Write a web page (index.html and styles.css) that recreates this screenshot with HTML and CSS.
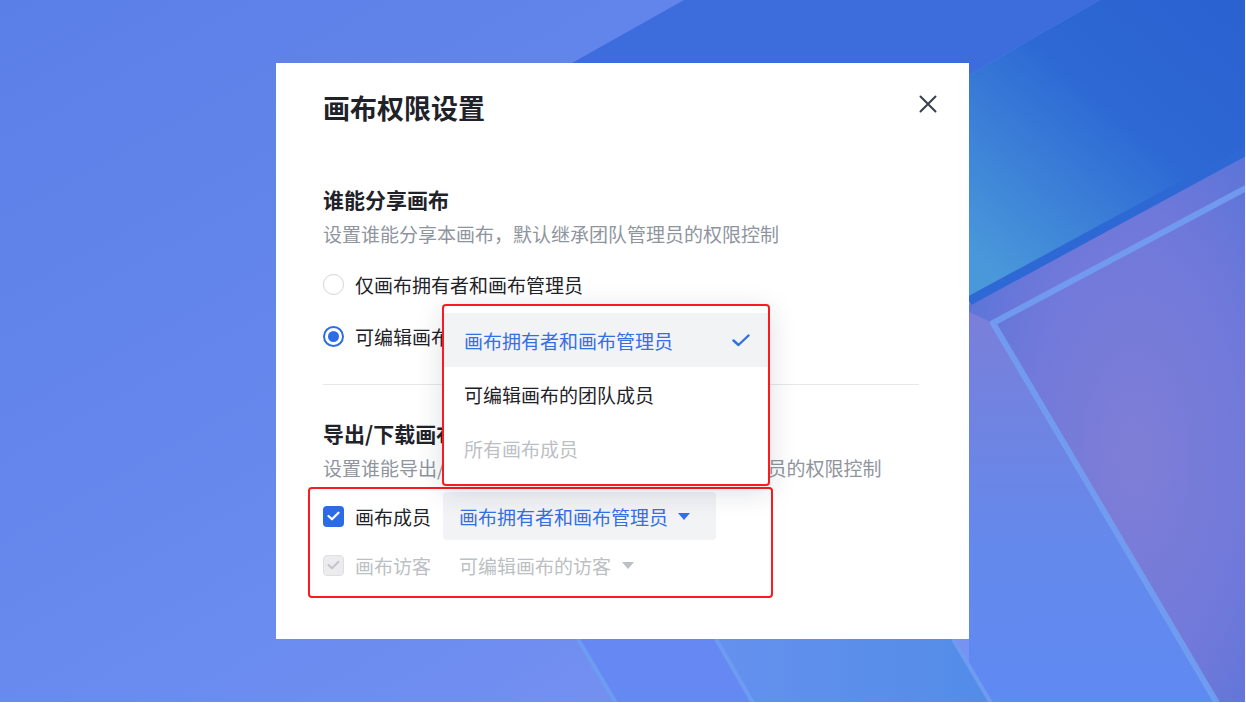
FILE: index.html
```html
<!DOCTYPE html>
<html lang="zh-CN">
<head>
  <meta charset="UTF-8">
  <title>画布权限设置</title>
  <link rel="stylesheet" href="styles.css">
</head>
<body>
<svg class="backdrop" viewBox="0 0 1246 703" preserveAspectRatio="none">
  <defs>
    <linearGradient id="base" x1="0" y1="0" x2="1" y2="1">
      <stop offset="0" stop-color="#5a7fe6"/>
      <stop offset="0.55" stop-color="#6a8bf0"/>
      <stop offset="1" stop-color="#7f96f2"/>
    </linearGradient>
    <linearGradient id="deep" x1="1" y1="0" x2="0.2" y2="1">
      <stop offset="0" stop-color="#2a62d0"/>
      <stop offset="0.45" stop-color="#2d68d4"/>
      <stop offset="1" stop-color="#4a98da"/>
    </linearGradient>
    <radialGradient id="violet" cx="0.6" cy="0.55" r="0.7">
      <stop offset="0" stop-color="#7f7ed6"/>
      <stop offset="0.6" stop-color="#7079da"/>
      <stop offset="1" stop-color="#5a74d8"/>
    </radialGradient>
    <linearGradient id="inner" x1="0" y1="0" x2="0" y2="1">
      <stop offset="0" stop-color="#7a7fd9"/>
      <stop offset="0.6" stop-color="#6489ec"/>
      <stop offset="1" stop-color="#5f8af2"/>
    </linearGradient>
    <linearGradient id="stripe" x1="0" y1="0" x2="1" y2="0">
      <stop offset="0" stop-color="#6590ee"/>
      <stop offset="1" stop-color="#528de8"/>
    </linearGradient>
  </defs>
  <rect width="1246" height="703" fill="url(#base)"/>
  <polygon points="684,0 1100,0 969,75 969,300 460,300 572,63" fill="#3d6ddd"/>
  <polygon points="1100,0 1246,0 1246,150 969,300 969,75" fill="url(#deep)"/>
  <polygon points="969,305 1246,155 1246,703 969,703" fill="url(#violet)"/>
  <polygon points="969,312 993,323 1217,703 969,703" fill="url(#inner)"/>
  <line x1="969" y1="301" x2="1246" y2="151" stroke="#2d68d4" stroke-width="9"/>
  <polyline points="1246,188 993,323 1217,703" fill="none" stroke="#72a0f2" stroke-width="6" stroke-linejoin="round" opacity="0.85"/>
  <polygon points="578,639 716,639 753,703 616,703" fill="#6588f2"/>
  <polygon points="716,639 953,639 991,703 753,703" fill="url(#stripe)"/>
  <line x1="578" y1="639" x2="616" y2="703" stroke="#6d9cf2" stroke-width="4"/>
  <line x1="716" y1="639" x2="753" y2="703" stroke="#6d9cf2" stroke-width="4"/>
  <line x1="953" y1="639" x2="991" y2="703" stroke="#6d9cf2" stroke-width="4"/>
  <rect x="0" y="702" width="1246" height="1" fill="#ffffff"/>
  <rect x="1245" y="0" width="1" height="703" fill="#ffffff"/>
</svg>

<div class="modal">
  <div class="modal-header">
    <h1 class="modal-title">画布权限设置</h1>
    <button class="close-btn" type="button">
      <svg width="18" height="18" viewBox="0 0 18 18"><path d="M1.5 1.5 L16.5 16.5 M16.5 1.5 L1.5 16.5" stroke="#3b3f48" stroke-width="2" stroke-linecap="round"/></svg>
    </button>
  </div>

  <div class="section first">
    <h2 class="section-title">谁能分享画布</h2>
    <p class="section-desc">设置谁能分享本画布，默认继承团队管理员的权限控制</p>
    <div class="radio-list">
      <label class="radio-item"><span class="radio"></span>仅画布拥有者和画布管理员</label>
      <label class="radio-item"><span class="radio checked"></span>可编辑画布的团队成员</label>
    </div>
  </div>

  <div class="divider"></div>

  <div class="section second">
    <h2 class="section-title">导出/下载画布</h2>
    <p class="section-desc">设置谁能导出/下载本画布的内容，默认继承团队管理员的权限控制</p>
    <div class="mark-box">
      <div class="perm-row">
        <span class="checkbox"><svg width="13" height="10" viewBox="0 0 13 10"><path d="M1.5 5 L5 8.3 L11.5 1.7" fill="none" stroke="#fff" stroke-width="2.2" stroke-linecap="round" stroke-linejoin="round"/></svg></span>
        <span class="perm-label">画布成员</span>
        <span class="select active">画布拥有者和画布管理员<i class="caret"></i></span>
      </div>
      <div class="perm-row disabled">
        <span class="checkbox"><svg width="13" height="10" viewBox="0 0 13 10"><path d="M1.5 5 L5 8.3 L11.5 1.7" fill="none" stroke="#c3c5ca" stroke-width="2" stroke-linecap="round" stroke-linejoin="round"/></svg></span>
        <span class="perm-label">画布访客</span>
        <span class="select">可编辑画布的访客<i class="caret"></i></span>
      </div>
    </div>
  </div>

  <ul class="dropdown">
    <li class="option selected">画布拥有者和画布管理员
      <svg width="18" height="13" viewBox="0 0 18 13"><path d="M1.5 6.5 L6.5 11 L16.5 1.5" fill="none" stroke="#336fe6" stroke-width="2.4" stroke-linecap="round" stroke-linejoin="round"/></svg>
    </li>
    <li class="option">可编辑画布的团队成员</li>
    <li class="option muted">所有画布成员</li>
  </ul>
</div>
</body>
</html>
```

FILE: styles.css
```css
html, body {
  margin: 0;
  padding: 0;
  height: 100%;
}
body {
  position: relative;
  overflow: hidden;
  display: flex;
  align-items: center;
  justify-content: center;
  font-family: "Noto Sans CJK SC", "Noto Sans", sans-serif;
  color: #1f2329;
}
.backdrop {
  position: absolute;
  top: 0;
  left: 0;
  width: 100%;
  height: 100%;
  z-index: 0;
}
.modal {
  position: relative;
  z-index: 1;
  width: 693px;
  height: 576px;
  margin: -1px 0 0 -1px;
  box-sizing: border-box;
  padding: 27px 50px 0 47px;
  background: #fff;
}
.modal-header {
  display: flex;
  justify-content: space-between;
  align-items: flex-start;
}
.modal-title {
  margin: 0;
  font-size: 27px;
  line-height: 36px;
  font-weight: 700;
  color: #1f2329;
}
.close-btn {
  margin: 5px -18px 0 0;
  padding: 0;
  width: 18px;
  height: 18px;
  border: 0;
  background: none;
  display: flex;
}
.section.first {
  margin-top: 58px;
}
.section.second {
  margin-top: 33px;
}
.section-title {
  margin: 0;
  font-size: 21px;
  line-height: 30px;
  font-weight: 700;
}
.section-desc {
  margin: 6px 0 0;
  font-size: 19px;
  line-height: 28px;
  color: #8f959e;
  white-space: nowrap;
}
.radio-list {
  margin-top: 16px;
  display: flex;
  flex-direction: column;
  gap: 12px;
}
.radio-item {
  display: flex;
  align-items: center;
  height: 40px;
  font-size: 19px;
  gap: 11px;
}
.radio {
  width: 21px;
  height: 21px;
  box-sizing: border-box;
  border-radius: 50%;
  border: 1px solid #d0d3d8;
  background: #fff;
}
.radio.checked {
  border: 2px solid #2e6be6;
  position: relative;
}
.radio.checked::after {
  content: "";
  position: absolute;
  left: 3px;
  top: 3px;
  width: 11px;
  height: 11px;
  border-radius: 50%;
  background: #2e6be6;
}
.divider {
  margin-top: 28px;
  height: 1px;
  background: #e6e7ea;
}
.mark-box {
  margin: 5px 0 0 -15px;
  width: 465px;
  box-sizing: border-box;
  padding: 3px 0 7px 13px;
  border: 2px solid #fb1a20;
  border-radius: 4px;
  display: flex;
  flex-direction: column;
  gap: 1px;
}
.perm-row {
  display: flex;
  align-items: center;
  height: 48px;
  font-size: 19px;
}
.checkbox {
  width: 21px;
  height: 21px;
  box-sizing: border-box;
  border-radius: 4px;
  background: #2b6ce6;
  display: flex;
  align-items: center;
  justify-content: center;
}
.perm-label {
  margin-left: 11px;
}
.select {
  margin-left: 12px;
  height: 48px;
  padding: 0 26px 0 16px;
  border-radius: 4px;
  display: flex;
  align-items: center;
  color: #336fe6;
}
.select.active {
  background: #f2f3f5;
}
.caret {
  margin-left: 10px;
  width: 0;
  height: 0;
  border-left: 6px solid transparent;
  border-right: 6px solid transparent;
  border-top: 7px solid #336fe6;
}
.perm-row.disabled .checkbox {
  background: #ececee;
  border: 1px solid #dedfe2;
}
.perm-row.disabled .perm-label,
.perm-row.disabled .select {
  color: #bcbfc4;
}
.perm-row.disabled .caret {
  border-top-color: #bcbfc4;
  margin-left: 11px;
}
.dropdown {
  position: absolute;
  left: 166px;
  top: 241px;
  width: 328px;
  box-sizing: border-box;
  margin: 0;
  padding: 7px 0 9px;
  list-style: none;
  background: #fff;
  border: 2px solid #fb1a20;
  border-radius: 4px;
  box-shadow: 0 6px 28px rgba(20, 30, 60, 0.14);
}
.option {
  height: 54px;
  padding: 0 18px 0 20px;
  display: flex;
  align-items: center;
  justify-content: space-between;
  font-size: 19px;
  color: #1f2329;
}
.option.selected {
  background: #f2f3f5;
  color: #336fe6;
}
.option.muted {
  color: #bcbfc4;
}
```
